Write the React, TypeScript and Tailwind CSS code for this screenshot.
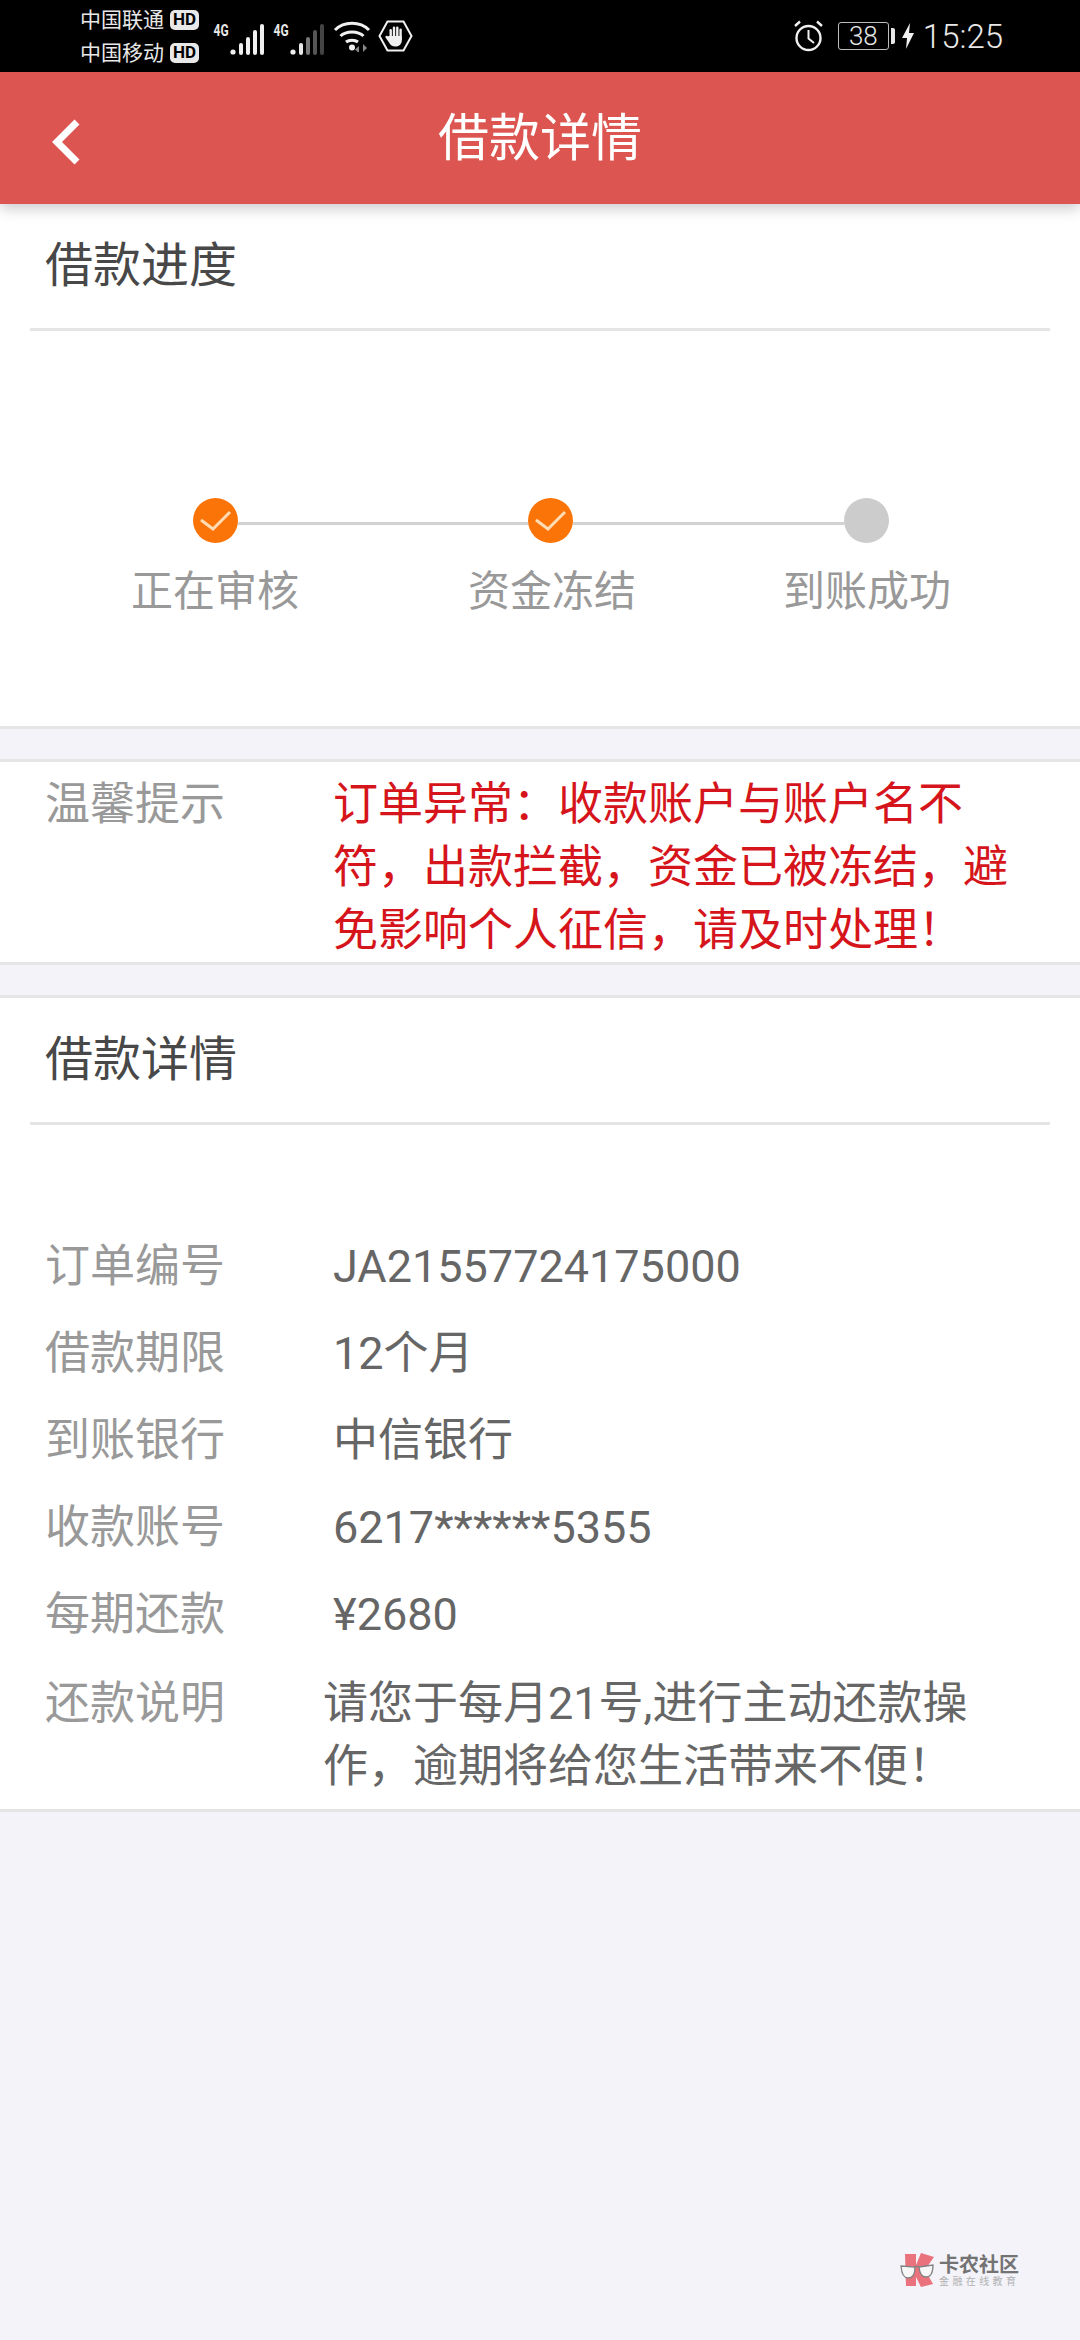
import { ReactNode } from "react";

function Signal({ dim = false }: { dim?: boolean }) {
  // last bars get darker on the second SIM
  const fade = dim ? ["#f0f0f0", "#e8e8e8", "#777", "#555", "#444"] : ["#f0f0f0", "#f0f0f0", "#f0f0f0", "#f0f0f0", "#f0f0f0"];
  return (
    <svg width="34" height="32" viewBox="0 0 34 32">
      <circle cx="3" cy="28" r="2.6" fill={fade[0]} />
      <rect x="9" y="19" width="4" height="12" rx="2" fill={fade[1]} />
      <rect x="16" y="13" width="4" height="18" rx="2" fill={fade[2]} />
      <rect x="23" y="6" width="4" height="25" rx="2" fill={fade[3]} />
      <rect x="30" y="0" width="4" height="31" rx="2" fill={fade[4]} />
    </svg>
  );
}

function HdBadge({ outline = false }: { outline?: boolean }) {
  return (
    <span
      className={`flex h-[20px] w-[29px] items-center justify-center rounded-[5px] bg-[#e8e8e8] text-[17px] leading-none font-bold text-black ${
        outline ? "border-2 border-[#e8e8e8]" : ""
      }`}
    >
      HD
    </span>
  );
}

function StatusBar() {
  return (
    <div className="flex h-[72px] items-center bg-black pl-[80px] text-[#e8e8e8]">
      <div className="flex w-[120px] flex-col gap-[13px] text-[21px] leading-[20px]">
        <div className="flex items-center gap-[6px]">
          <span>中国联通</span>
          <HdBadge />
        </div>
        <div className="flex items-center gap-[6px]">
          <span>中国移动</span>
          <HdBadge outline />
        </div>
      </div>
      <div className="ml-[11px] flex items-end">
        <span className="mb-[17px] scale-x-75 text-[16px] leading-none font-bold">4G</span>
        <span className="mt-[8px] -ml-[1px]">
          <Signal />
        </span>
      </div>
      <div className="ml-[7px] flex items-end">
        <span className="mb-[17px] scale-x-75 text-[16px] leading-none font-bold">4G</span>
        <span className="mt-[8px] -ml-[1px]">
          <Signal dim />
        </span>
      </div>
      {/* wifi */}
      <svg className="ml-[9px]" width="38" height="32" viewBox="0 0 38 32" fill="none" stroke="#f0f0f0" strokeWidth="3">
        <path d="M2 10 C11 1 27 1 36 10" />
        <path d="M7.5 16 C13 10.5 25 10.5 30.5 16" />
        <path d="M13 22 C16 19.5 22 19.5 25 22" />
        <circle cx="19" cy="27.5" r="3" fill="#f0f0f0" stroke="none" />
        <path d="M26 26 l-4 3.5 l4 3.5z M30 24 l4 4 l-4 4z" fill="#888" stroke="none" />
      </svg>
      {/* hand in a hexagon */}
      <svg className="ml-[7px]" width="35" height="32" viewBox="0 0 35 32" fill="none">
        <path d="M9.5 1.5 H25.5 L33.5 16 L25.5 30.5 H9.5 L1.5 16Z" stroke="#f0f0f0" strokeWidth="2" />
        <g fill="#f0f0f0">
          <rect x="11.5" y="9" width="2.4" height="11" rx="1.2" />
          <rect x="14.8" y="6.5" width="2.4" height="13" rx="1.2" />
          <rect x="18.1" y="6.5" width="2.4" height="13" rx="1.2" />
          <rect x="21.4" y="8.5" width="2.4" height="12" rx="1.2" />
          <path d="M11.5 16 H23.8 V20 C23.8 24 21.5 26.5 17.5 26.5 C14 26.5 12.5 25 11 22.5 L7.5 17.5 C7 16.2 8.6 15.2 9.6 16.2Z" />
        </g>
      </svg>
      <div className="ml-auto flex items-center pr-[77px]">
        {/* alarm clock */}
        <svg width="31" height="32" viewBox="0 0 31 32" fill="none" stroke="#f0f0f0" strokeWidth="2.4">
          <circle cx="15.5" cy="18" r="12" />
          <path d="M15.5 10 V18.5 L21 23" strokeWidth="2" />
          <path d="M2 6 L7 1.5 M29 6 L24 1.5" />
        </svg>
        <div className="ml-[14px] flex h-[28px] w-[51px] items-center justify-center rounded-[3px] border border-[#bdbdbd] text-[26px] leading-none font-light">
          38
        </div>
        <div className="ml-[2px] h-[16px] w-[4px] rounded-r-[2px] bg-[#e8e8e8]" />
        <svg className="ml-[7px]" width="12" height="26" viewBox="0 0 12 26" fill="#f0f0f0">
          <path d="M8 0 L0 15 H5 L4 26 L12 10 H7Z" />
        </svg>
        <span className="ml-[9px] text-[33px] leading-none font-light">15:25</span>
      </div>
    </div>
  );
}

function Header() {
  return (
    <div className="relative z-10 flex h-[132px] items-center justify-center bg-[#dc5550] shadow-[0_4px_14px_rgba(0,0,0,0.22)]">
      <svg className="absolute top-[46px] left-[50px]" width="32" height="48" viewBox="0 0 32 48" fill="none">
        <path d="M27 4 L7 24 L27 44" stroke="#fff" strokeWidth="7" />
      </svg>
      <span className="text-[51px] leading-none text-white">借款详情</span>
    </div>
  );
}

function SectionTitle({ children }: { children: ReactNode }) {
  return (
    <>
      <div className="flex h-[124px] items-center pl-[45px] text-[48px] text-[#484848]">{children}</div>
      <div className="mx-[30px] h-[3px] bg-[#e5e5e5]" />
    </>
  );
}

function StepDot({ done = true }: { done?: boolean }) {
  if (!done) return <div className="h-[45px] w-[45px] shrink-0 rounded-full bg-[#cccccc]" />;
  return (
    <div className="flex h-[45px] w-[45px] shrink-0 items-center justify-center rounded-full bg-[#fb7408]">
      <svg width="32" height="24" viewBox="0 0 32 24" fill="none">
        <path d="M1 11 L13 20 L30 3" stroke="#ffdcb4" strokeWidth="3" />
      </svg>
    </div>
  );
}

function Progress() {
  return (
    <div className="border-b-[3px] border-[#e5e5e5] bg-white">
      <SectionTitle>借款进度</SectionTitle>
      <div className="flex items-center pt-[167px] pl-[193px]">
        <StepDot />
        <div className="mt-[6px] h-[3px] w-[290px] bg-[#d2d2d2]" />
        <StepDot />
        <div className="mt-[6px] h-[3px] w-[271px] bg-[#d2d2d2]" />
        <StepDot done={false} />
      </div>
      <div className="flex pt-[18px] pb-[103px] pl-[131px] text-[42px] leading-[62px] text-[#999]">
        <span className="w-[337px]">正在审核</span>
        <span className="w-[315px]">资金冻结</span>
        <span>到账成功</span>
      </div>
    </div>
  );
}

function Notice() {
  return (
    <div className="mt-[30px] flex border-y-[3px] border-[#e5e5e5] bg-white pt-[11px]">
      <div className="w-[333px] shrink-0 pl-[45px] text-[45px] leading-[63px] text-[#999]">温馨提示</div>
      <div className="w-[690px] text-[45px] leading-[63px] text-[#d5151b]">
        订单异常：收款账户与账户名不符，出款拦截，资金已被冻结，避免影响个人征信，请及时处理！
      </div>
    </div>
  );
}

function Row({ label, children }: { label: string; children: ReactNode }) {
  return (
    <div className="flex h-[87px] items-center text-[45px]">
      <div className="w-[333px] shrink-0 pl-[45px] text-[#999]">{label}</div>
      <div className="text-[#666]">{children}</div>
    </div>
  );
}

function Details() {
  return (
    <div className="mt-[30px] border-y-[3px] border-[#e5e5e5] bg-white">
      <SectionTitle>借款详情</SectionTitle>
      <div className="pt-[98px]">
        <Row label="订单编号">JA21557724175000</Row>
        <Row label="借款期限">12个月</Row>
        <Row label="到账银行">中信银行</Row>
        <Row label="收款账号">6217******5355</Row>
        <Row label="每期还款">¥2680</Row>
        <div className="flex pt-[14px] pb-[11px] text-[45px] leading-[63px]">
          <div className="w-[323px] shrink-0 pl-[45px] text-[#999]">还款说明</div>
          <div className="w-[660px] text-[#666]">请您于每月21号,进行主动还款操作，逾期将给您生活带来不便！</div>
        </div>
      </div>
    </div>
  );
}

function Watermark() {
  return (
    <div className="absolute top-[2253px] left-[900px] flex items-center gap-[4px] opacity-90">
      <svg width="35" height="35" viewBox="0 0 35 35">
        <path d="M5 1 H16 V12 L21 0 L34 4 L25 17 L33 31 L21 34 L16 24 V33 H6Z" fill="#e9656f" />
        <path d="M1 13 L15 14 Q15 25 8 25 Q2 25 1 13Z" fill="#f8f8f8" stroke="#777" strokeWidth="1.3" />
        <path d="M19 14 L33 12 Q33 24 26 24 Q20 24 19 14Z" fill="#f8f8f8" stroke="#777" strokeWidth="1.3" />
        <path d="M15 14 Q17 12.5 19 14" fill="none" stroke="#777" strokeWidth="1.3" />
      </svg>
      <div className="flex flex-col">
        <span className="text-[20px] leading-[20px] font-bold text-[#666]">卡农社区</span>
        <span className="mt-[1px] text-[10px] leading-[11px] tracking-[3.4px] text-[#aaa]">金融在线教育</span>
      </div>
    </div>
  );
}

export default function App() {
  return (
    <div className="relative min-h-[2340px] bg-[#f3f3f9] font-['Roboto','Noto_Sans_CJK_SC',sans-serif]">
      <StatusBar />
      <Header />
      <Progress />
      <Notice />
      <Details />
      <Watermark />
    </div>
  );
}
